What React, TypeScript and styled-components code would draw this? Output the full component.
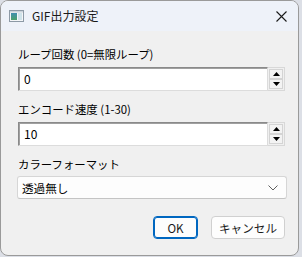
import React from "react";
import styled, { createGlobalStyle } from "styled-components";

const Global = createGlobalStyle`
  html, body { margin: 0; padding: 0; background: #dcdfe6; }
  body { font-family: "Noto Sans CJK JP", "Noto Sans", sans-serif; font-size: 12px; color: #000; }
  * { box-sizing: border-box; }
`;

const Window = styled.div`
  width: 299px;
  height: 256px;
  background: #f0f0f0;
  border: 1px solid #9a9a9a;
  border-radius: 8px;
  overflow: hidden;
  display: flex;
  flex-direction: column;
`;

const TitleBar = styled.div`
  height: 30px;
  background: #eef2f9;
  display: flex;
  align-items: center;
  padding: 0 0 0 8px;
`;

const TitleText = styled.div`
  flex: 1;
  margin-left: 8px;
  font-size: 12px;
  line-height: 16px;
  color: #1a1a1a;
`;

const CloseBtn = styled.div`
  width: 32px;
  height: 30px;
  display: flex;
  align-items: center;
  justify-content: center;
  margin-right: 1px;
`;

const Body = styled.div`
  flex: 1;
  display: flex;
  flex-direction: column;
  padding: 15px 13px 0 16px;
`;

const Label = styled.div<{ $top: number }>`
  font-size: 11.4px;
  line-height: 16px;
  margin-top: ${(p) => p.$top}px;
  margin-left: 1px;
  color: #000;
`;

const SpinRow = styled.div`
  display: flex;
  margin-top: 5px;
  margin-left: 1px;
  height: 24px;
`;

const Edit = styled.div`
  width: 251px;
  height: 24px;
  background: #fff;
  border-style: solid;
  border-width: 1px;
  border-color: #8a8a8a #dcdcdc #dcdcdc #8a8a8a;
  box-shadow: inset 1px 1px 0 #a0a0a0;
  padding: 3px 0 0 5px;
  font-size: 12px;
  line-height: 16px;
`;

const Spin = styled.div`
  width: 17px;
  height: 24px;
  border: 1px solid #d8d8d8;
  border-left: none;
  display: flex;
  flex-direction: column;
  justify-content: space-between;
  padding: 1px;
  background: #f0f0f0;
`;

const SpinBtn = styled.div`
  height: 10px;
  border: 1px solid #d4d4d4;
  background: #f3f3f3;
  display: flex;
  align-items: center;
  justify-content: center;
`;

const Combo = styled.div`
  margin-top: 4px;
  height: 23px;
  width: 270px;
  background: #fdfdfd;
  border: 1px solid #d6d6d6;
  border-bottom-color: #c4c4c4;
  border-radius: 3px;
  display: flex;
  align-items: center;
  padding: 0 8px 0 4px;
  font-size: 11.6px;
`;

const ComboText = styled.div`
  flex: 1;
`;

const Buttons = styled.div`
  display: flex;
  justify-content: flex-end;
  gap: 13px;
  margin-top: 17px;
`;

const Btn = styled.div<{ $w: number; $primary?: boolean }>`
  width: ${(p) => p.$w}px;
  height: 23px;
  border-radius: 4px;
  background: #fdfdfd;
  border: ${(p) => (p.$primary ? "1px solid #0067c0" : "1px solid #d0d0d0")};
  box-shadow: ${(p) => (p.$primary ? "inset 0 0 0 1px #0067c0" : "none")};
  display: flex;
  align-items: center;
  justify-content: center;
  font-size: 11.6px;
  color: #1a1a1a;
`;

const Up = () => (
  <svg width="7" height="4" viewBox="0 0 7 4"><path d="M0 4 L3.5 0 L7 4 Z" fill="#000" /></svg>
);
const Down = () => (
  <svg width="7" height="4" viewBox="0 0 7 4"><path d="M0 0 L3.5 4 L7 0 Z" fill="#000" /></svg>
);

const SpinBox = ({ value }: { value: string }) => (
  <SpinRow>
    <Edit>{value}</Edit>
    <Spin>
      <SpinBtn><Up /></SpinBtn>
      <SpinBtn><Down /></SpinBtn>
    </Spin>
  </SpinRow>
);

export default function App() {
  return (
    <>
      <Global />
      <Window>
        <TitleBar>
          <svg width="15" height="12" viewBox="0 0 15 12">
            <defs>
              <linearGradient id="g" x1="0" y1="0" x2="0" y2="1">
                <stop offset="0" stopColor="#3f8fb0" />
                <stop offset="1" stopColor="#4aa06a" />
              </linearGradient>
            </defs>
            <rect x="0.5" y="0.5" width="14" height="11" fill="#f4f6f8" stroke="#8d9aa6" />
            <rect x="2" y="3" width="6" height="7" fill="url(#g)" />
            <rect x="9" y="3" width="4" height="7" fill="#cfe3ea" />
            <rect x="1" y="1" width="13" height="1.5" fill="#c9d2da" />
          </svg>
          <TitleText>GIF出力設定</TitleText>
          <CloseBtn>
            <svg width="11" height="11" viewBox="0 0 11 11">
              <path d="M0.5 0.5 L10.5 10.5 M10.5 0.5 L0.5 10.5" stroke="#1a1a1a" strokeWidth="1.1" />
            </svg>
          </CloseBtn>
        </TitleBar>
        <Body>
          <Label $top={0}>ループ回数 (0=無限ループ)</Label>
          <SpinBox value="0" />
          <Label $top={10}>エンコード速度 (1-30)</Label>
          <SpinBox value="10" />
          <Label $top={10}>カラーフォーマット</Label>
          <Combo>
            <ComboText>透過無し</ComboText>
            <svg width="10" height="6" viewBox="0 0 10 6">
              <path d="M0.5 0.5 L5 5 L9.5 0.5" fill="none" stroke="#606060" strokeWidth="1" />
            </svg>
          </Combo>
          <Buttons>
            <Btn $w={45} $primary>OK</Btn>
            <Btn $w={74}>キャンセル</Btn>
          </Buttons>
        </Body>
      </Window>
    </>
  );
}
